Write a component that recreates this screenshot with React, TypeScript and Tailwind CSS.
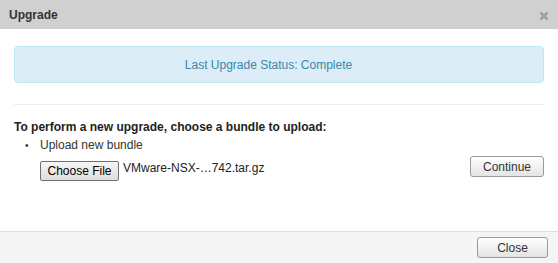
import React from 'react';

function Btn({ children, className = '' }: { children: React.ReactNode; className?: string }) {
    return (
        <button
            className={`h-[21px] rounded-[3px] border border-[#9a9a9a] bg-linear-to-b from-white to-[#e4e4e4] text-[12px] leading-none text-[#333] ${className}`}
        >
            {children}
        </button>
    );
}

export default function App() {
    return (
        <div className="flex h-[263px] w-[558px] flex-col bg-white font-['Liberation_Sans',Arial,sans-serif] text-[12px] text-[#333]">
            <div className="flex h-[29px] items-center justify-between bg-[#d0d0d0] pl-[9px] pr-[10px]">
                <h3 className="text-[12px] font-bold text-[#333]">Upgrade</h3>
                <svg width="8" height="8" viewBox="0 0 8 8" className="mt-[3px]">
                    <path d="M1 1L7 7M7 1L1 7" stroke="#9a9a9a" strokeWidth="2.2" strokeLinecap="square" />
                </svg>
            </div>

            <div className="flex-1 px-[14px] pt-[17px]">
                <div className="flex h-[37px] items-center justify-center rounded-[4px] border border-[#bce8f1] bg-[#dcedf7] pl-[14px] pr-[35px] text-[12px] text-[#3a87ad]">
                    Last Upgrade Status: Complete
                </div>

                <hr className="mt-[21px] border-t border-[#eeeeee]" />

                <p className="mt-[15px] text-[12px] font-bold leading-[15px] text-[#222]">
                    To perform a new upgrade, choose a bundle to upload:
                </p>

                <div className="mt-[3px] flex items-end justify-between">
                    <div>
                        <div className="flex leading-[15px]">
                            <span className="w-[26px] pl-[11px] text-[10px]">•</span>
                            <span className="text-[#333]">Upload new bundle</span>
                        </div>
                        <div className="mt-[8px] flex items-start pl-[26px]">
                            <button className="h-[20px] w-[79px] rounded-[2px] border border-[#707070] bg-linear-to-b from-[#f6f6f6] to-[#dedede] text-[12px] leading-none text-black">
                                Choose File
                            </button>
                            <span className="ml-[4px] leading-[14px] text-[#222]">VMware-NSX-…742.tar.gz</span>
                        </div>
                    </div>
                    <Btn className="mb-[4px] w-[74px]">Continue</Btn>
                </div>
            </div>

            <div className="flex h-[32px] items-center justify-end border-t border-[#dddddd] bg-[#f5f5f5] px-[10px]">
                <Btn className="w-[71px]">Close</Btn>
            </div>
        </div>
    );
}
